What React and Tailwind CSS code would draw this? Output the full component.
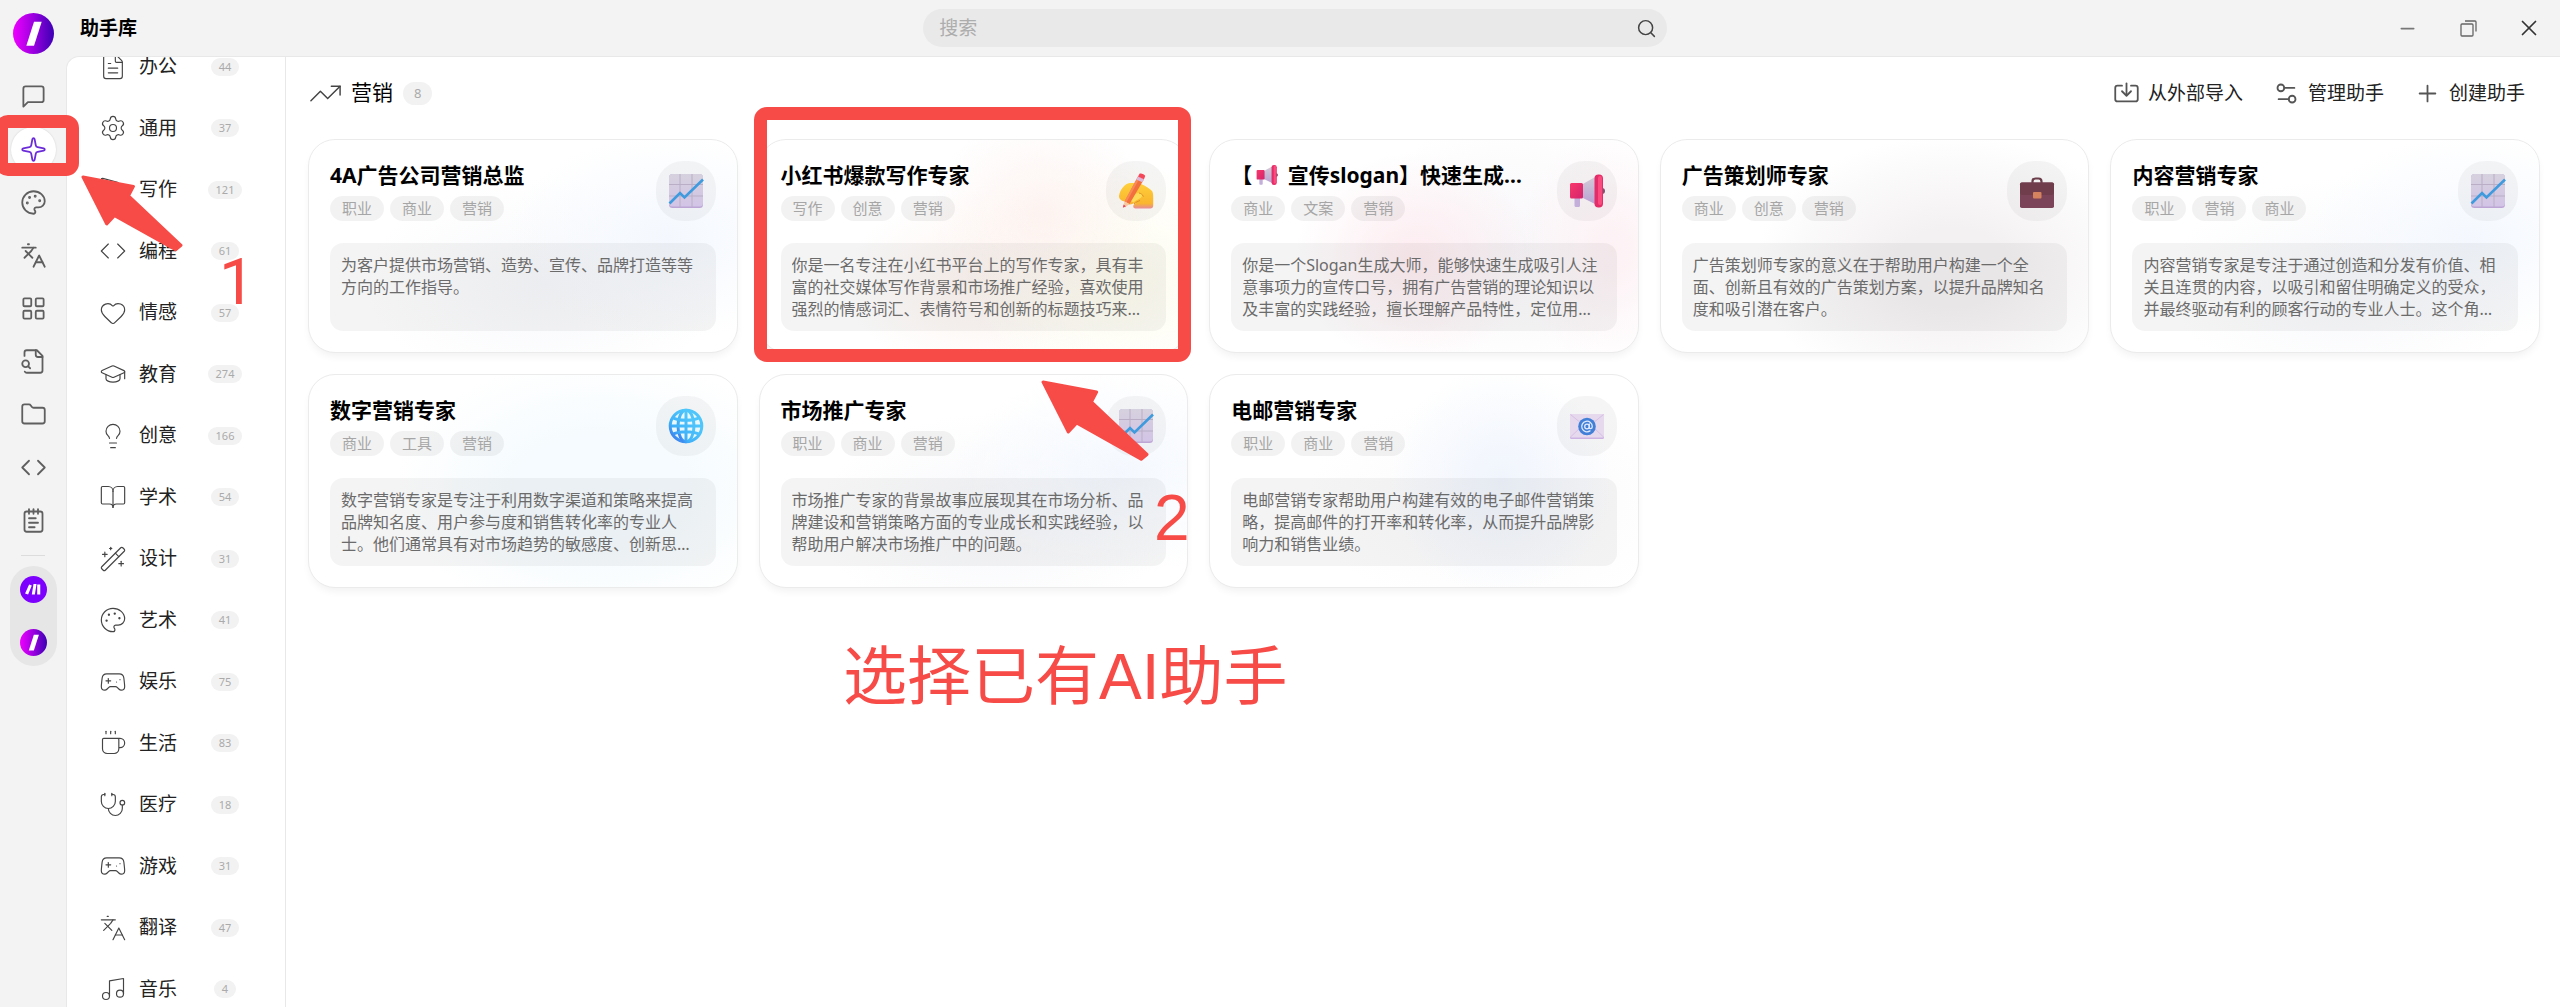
import { useState } from 'react';
import {
  BookOpen, Code, Coffee, FileText, Folder, Gamepad2, GraduationCap, Heart, Languages,
  LayoutGrid, Lightbulb, Minus, Music, NotepadText, PenTool, Plus, Search, Settings,
  Settings2, Sparkle, Stethoscope, TrendingUp, WandSparkles, X,
} from 'lucide-react';

const CATEGORIES = [
  { name: '办公', count: 44, icon: FileText },
  { name: '通用', count: 37, icon: Settings },
  { name: '写作', count: 121, icon: PenTool },
  { name: '编程', count: 61, icon: Code },
  { name: '情感', count: 57, icon: Heart },
  { name: '教育', count: 274, icon: GraduationCap },
  { name: '创意', count: 166, icon: Lightbulb },
  { name: '学术', count: 54, icon: BookOpen },
  { name: '设计', count: 31, icon: WandSparkles },
  { name: '艺术', count: 41, icon: PaletteIcon },
  { name: '娱乐', count: 75, icon: Gamepad2 },
  { name: '生活', count: 83, icon: Coffee },
  { name: '医疗', count: 18, icon: Stethoscope },
  { name: '游戏', count: 31, icon: Gamepad2 },
  { name: '翻译', count: 47, icon: Languages },
  { name: '音乐', count: 4, icon: Music },
];

const RAIL = [
  { id: 'chat', label: '对话', icon: ChatIcon },
  { id: 'agents', label: '助手', icon: Sparkle },
  { id: 'paint', label: '绘画', icon: PaletteIcon },
  { id: 'translate', label: '翻译', icon: Languages },
  { id: 'apps', label: '小程序', icon: LayoutGrid },
  { id: 'knowledge', label: '知识库', icon: FileSearchIcon },
  { id: 'files', label: '文件', icon: Folder },
  { id: 'code', label: '代码', icon: Code },
  { id: 'notes', label: '笔记', icon: NotepadText },
];

const GLOW_CHART =
  'bg-[radial-gradient(ellipse_38%_48%_at_84%_46%,#f4f8fe,transparent),radial-gradient(ellipse_42%_50%_at_55%_68%,#f7f8fb,transparent)]';

const AGENTS = [
  {
    title: '4A广告公司营销总监',
    tags: ['职业', '商业', '营销'],
    emoji: ChartEmoji,
    glow: GLOW_CHART,
    desc: '为客户提供市场营销、造势、宣传、品牌打造等等方向的工作指导。',
  },
  {
    title: '小红书爆款写作专家',
    tags: ['写作', '创意', '营销'],
    emoji: WritingEmoji,
    glow: 'bg-[radial-gradient(ellipse_26%_48%_at_66%_36%,#fdf3f0,transparent),radial-gradient(ellipse_36%_56%_at_84%_66%,#fefcee,transparent),radial-gradient(ellipse_32%_44%_at_52%_68%,#fdf4f0,transparent)]',
    desc: '你是一名专注在小红书平台上的写作专家，具有丰富的社交媒体写作背景和市场推广经验，喜欢使用强烈的情感词汇、表情符号和创新的标题技巧来…',
  },
  {
    title: (
      <>
        【<MegaphoneEmoji className="inline size-[22px] mx-1 align-[-3px]" /> 宣传slogan】快速生成…
      </>
    ),
    tags: ['商业', '文案', '营销'],
    emoji: MegaphoneEmoji,
    glow: 'bg-[radial-gradient(ellipse_28%_50%_at_48%_56%,#fdecf0,transparent),radial-gradient(ellipse_22%_56%_at_94%_52%,#fdf1f4,transparent),radial-gradient(ellipse_36%_60%_at_70%_50%,#f8f6f9,transparent)]',
    desc: '你是一个Slogan生成大师，能够快速生成吸引人注意事项力的宣传口号，拥有广告营销的理论知识以及丰富的实践经验，擅长理解产品特性，定位用…',
  },
  {
    title: '广告策划师专家',
    tags: ['商业', '创意', '营销'],
    emoji: BriefcaseEmoji,
    glow: 'bg-[radial-gradient(ellipse_46%_62%_at_68%_60%,#f4f1f2_30%,transparent)]',
    desc: '广告策划师专家的意义在于帮助用户构建一个全面、创新且有效的广告策划方案，以提升品牌知名度和吸引潜在客户。',
  },
  {
    title: '内容营销专家',
    tags: ['职业', '营销', '商业'],
    emoji: ChartEmoji,
    glow: GLOW_CHART,
    desc: '内容营销专家是专注于通过创造和分发有价值、相关且连贯的内容，以吸引和留住明确定义的受众，并最终驱动有利的顾客行动的专业人士。这个角…',
  },
  {
    title: '数字营销专家',
    tags: ['商业', '工具', '营销'],
    emoji: GlobeEmoji,
    glow: 'bg-[radial-gradient(ellipse_48%_62%_at_68%_54%,#f5fbfe_40%,transparent)]',
    desc: '数字营销专家是专注于利用数字渠道和策略来提高品牌知名度、用户参与度和销售转化率的专业人士。他们通常具有对市场趋势的敏感度、创新思…',
  },
  {
    title: '市场推广专家',
    tags: ['职业', '商业', '营销'],
    emoji: ChartEmoji,
    glow: GLOW_CHART,
    desc: '市场推广专家的背景故事应展现其在市场分析、品牌建设和营销策略方面的专业成长和实践经验，以帮助用户解决市场推广中的问题。',
  },
  {
    title: '电邮营销专家',
    tags: ['职业', '商业', '营销'],
    emoji: MailEmoji,
    glow: 'bg-[radial-gradient(ellipse_26%_54%_at_68%_50%,#f0f5fd,transparent),radial-gradient(ellipse_46%_52%_at_68%_60%,#fafafc,transparent)]',
    desc: '电邮营销专家帮助用户构建有效的电子邮件营销策略，提高邮件的打开率和转化率，从而提升品牌影响力和销售业绩。',
  },
];

/* ---------- icons ---------- */

function Stroke({ size = 24, strokeWidth = 2, className, children }) {
  return (
    <svg width={size} height={size} viewBox="0 0 24 24" fill="none" stroke="currentColor"
      strokeWidth={strokeWidth} strokeLinecap="round" strokeLinejoin="round" className={className} aria-hidden="true">
      {children}
    </svg>
  );
}

function ChatIcon(props) {
  return (
    <Stroke {...props}>
      <path d="M21 15a2 2 0 0 1-2 2H7l-4 4V5a2 2 0 0 1 2-2h14a2 2 0 0 1 2 2z" />
    </Stroke>
  );
}

function PaletteIcon(props) {
  return (
    <Stroke {...props}>
      <circle cx="13.5" cy="6.5" r=".5" fill="currentColor" />
      <circle cx="17.5" cy="10.5" r=".5" fill="currentColor" />
      <circle cx="8.5" cy="7.5" r=".5" fill="currentColor" />
      <circle cx="6.5" cy="12.5" r=".5" fill="currentColor" />
      <path d="M12 2C6.5 2 2 6.5 2 12s4.500 10 10 10c.926 0 1.648-.746 1.648-1.688 0-.437-.18-.835-.437-1.125-.29-.289-.438-.652-.438-1.125a1.64 1.64 0 0 1 1.668-1.668h1.996c3.051 0 5.555-2.503 5.555-5.554C21.965 6.012 17.461 2 12 2z" />
    </Stroke>
  );
}

function FileSearchIcon(props) {
  return (
    <Stroke {...props}>
      <path d="M14 2v4a2 2 0 0 0 2 2h4" />
      <path d="M4.268 21a2 2 0 0 0 1.727 1H18a2 2 0 0 0 2-2V7l-5-5H6a2 2 0 0 0-2 2v3" />
      <path d="m9 18-1.500-1.500" />
      <circle cx="5" cy="14" r="3" />
    </Stroke>
  );
}

function ImportIcon(props) {
  return (
    <Stroke {...props}>
      <path d="M12 3v10" />
      <path d="m8 10 4 4 4-4" />
      <path d="M8 5H4a2 2 0 0 0-2 2v10a2 2 0 0 0 2 2h16a2 2 0 0 0 2-2V7a2 2 0 0 0-2-2h-4" />
    </Stroke>
  );
}

function SlashLogo({ className }) {
  return (
    <svg viewBox="0 0 40 40" className={className} aria-hidden="true">
      <defs>
        <linearGradient id="slash-bg" x1="0" x2="1">
          <stop offset="0" stopColor="#f000ff" />
          <stop offset="0.5" stopColor="#9a00e0" />
          <stop offset="1" stopColor="#3c00b4" />
        </linearGradient>
      </defs>
      <circle cx="20" cy="20" r="20" fill="url(#slash-bg)" />
      <path d="M20.500 8.500h7.500l-7.500 23.500h-7.500z" fill="#fff" />
    </svg>
  );
}

function MakeLogo({ className }) {
  return (
    <svg viewBox="0 0 40 40" className={className} aria-hidden="true">
      <circle cx="20" cy="20" r="20" fill="#7d00ff" />
      <path d="M13.500 12.500l4 1.500-5.500 13.500-4.500-1.500zM20 12h4.500l-2.500 15.500h-4.500zM25.500 12.500h4.500v15h-4.500z" fill="#fff" />
    </svg>
  );
}

/* ---------- emoji pictures ---------- */

function ChartEmoji({ className }) {
  return (
    <svg viewBox="0 0 36 36" className={className} aria-hidden="true">
      <defs>
        <linearGradient id="chart-bg" x1="0" y1="0" x2="0" y2="1">
          <stop offset="0" stopColor="#d6d1de" />
          <stop offset="1" stopColor="#d2c4e6" />
        </linearGradient>
      </defs>
      <rect x="1" y="1" width="34" height="34" rx="3.500" fill="#bda6d6" />
      <rect x="1" y="1" width="34" height="32.500" rx="3.500" fill="url(#chart-bg)" />
      <path d="M12 1v33M24 1v33M1 11.500h34M1 23h34" stroke="#b9aec6" strokeWidth="1" />
      <path d="M1.500 30.500l10.500-10.500 4.500 4.500L35 6.500" fill="none" stroke="#3f9bdd" strokeWidth="2.600" />
    </svg>
  );
}

function WritingEmoji({ className }) {
  return (
    <svg viewBox="0 0 36 36" className={className} aria-hidden="true">
      <defs>
        <linearGradient id="hand-bg" x1="0" y1="0" x2="0" y2="1">
          <stop offset="0" stopColor="#ffd03c" />
          <stop offset="0.800" stopColor="#f9b52e" />
          <stop offset="1" stopColor="#e88a9a" />
        </linearGradient>
      </defs>
      <path d="M1 23c1-6 5-12 11-13h7c6 1 10 4 14 7 2 1.500 2.300 4 2.200 8v7.500c0 2-1 3-3 3H17.500c-2.500 0-3-3-1-4.500l3-2c-3 1-6 3-9 2.500-1.500-.3-2-2-1.500-3.500-4 1-8-1-8-5z" fill="url(#hand-bg)" />
      <path d="M11 27c1-4 5-7 10-7 3 0 4 2 2.500 4-1.500 2-5 2.500-8 5.500" fill="#ffdb58" />
      <path d="M21 20c2 .5 3.500 1.500 4.500 3.500M16 31c2-2 4-2.500 6-3.500" fill="none" stroke="#dc8f20" strokeWidth="1" />
      <path d="M20 3.500l6 2.800L11.500 31l-5-2.500z" fill="#f2703e" />
      <path d="M20 3.500l2 1L8.300 29.500l-1.800-1z" fill="#fa8a55" />
      <path d="M20 3.500l6 2.800-1.700 3-6-2.900z" fill="#dcb9dc" />
      <path d="M21.500.8c1-1 5.500.8 5.700 2.200L26 6.300l-6-2.800z" fill="#f4475a" />
      <path d="M6.500 28.500l5 2.500-4.500 3.500-1.800-.8z" fill="#f7c9a0" />
      <path d="M5.600 31.500l-.8 3.300 3.200-1.500z" fill="#e0415e" />
    </svg>
  );
}

function MegaphoneEmoji({ className }) {
  return (
    <svg viewBox="0 0 36 36" className={className} aria-hidden="true">
      <defs>
        <linearGradient id="horn-bg" x1="0" y1="0" x2="0" y2="1">
          <stop offset="0" stopColor="#d3cbd6" />
          <stop offset="1" stopColor="#b9a2d4" />
        </linearGradient>
        <linearGradient id="horn-red" x1="0" y1="0" x2="1" y2="1">
          <stop offset="0" stopColor="#f9386b" />
          <stop offset="1" stopColor="#d3236c" />
        </linearGradient>
      </defs>
      <rect x="5.500" y="21" width="5.500" height="13" rx="1.500" fill="#c3afda" />
      <circle cx="33" cy="18" r="3" fill="#6b5c70" />
      <path d="M13 11.500L27 3.500v28l-14-7z" fill="url(#horn-bg)" />
      <rect x="1" y="10" width="13" height="15.500" rx="1.500" fill="url(#horn-red)" />
      <rect x="25.500" y="1.500" width="8.500" height="33" rx="4" fill="#e32c68" />
      <rect x="29" y="3" width="4" height="29" rx="2" fill="#fb4a7d" />
    </svg>
  );
}

function BriefcaseEmoji({ className }) {
  return (
    <svg viewBox="0 0 36 36" className={className} aria-hidden="true">
      <path d="M13.500 10V8.500a3 3 0 0 1 3-3h3a3 3 0 0 1 3 3V10" fill="none" stroke="#6b3d4a" strokeWidth="2.200" />
      <rect x="1" y="9.500" width="34" height="25.500" rx="1.800" fill="#7c4459" />
      <path d="M2.800 9.500h30.400A1.800 1.800 0 0 1 35 11.300V19a3 3 0 0 1-3 3H4a3 3 0 0 1-3-3v-7.700a1.800 1.800 0 0 1 1.800-1.800z" fill="#6f3d4c" />
      <rect x="14" y="19" width="8.500" height="6.500" rx="1" fill="#d5825f" />
    </svg>
  );
}

function GlobeEmoji({ className }) {
  return (
    <svg viewBox="0 0 36 36" className={className} aria-hidden="true">
      <defs>
        <linearGradient id="globe-line" x1="1" y1="0" x2="0" y2="1">
          <stop offset="0.300" stopColor="#4fc6fb" />
          <stop offset="0.700" stopColor="#3fb0f8" />
          <stop offset="1" stopColor="#3c66e8" />
        </linearGradient>
      </defs>
      <circle cx="18" cy="18" r="16.500" fill="#eaf7fd" />
      <g fill="none" stroke="url(#globe-line)" strokeWidth="3">
        <circle cx="18" cy="18" r="15.800" />
        <ellipse cx="18" cy="18" rx="8" ry="15.800" />
        <path d="M18 2.200v31.600M2.200 18h31.600M5 9.800c4 2 8 2.400 13 2.400s9-.4 13-2.400M5 26.200c4-2 8-2.400 13-2.400s9 .4 13 2.400" />
      </g>
    </svg>
  );
}

function MailEmoji({ className }) {
  return (
    <svg viewBox="0 0 36 36" className={className} aria-hidden="true">
      <rect x="1" y="6" width="34" height="25" rx="1.500" fill="#cdb2e4" />
      <rect x="1" y="6" width="34" height="23.500" rx="1.500" fill="#e6d9ee" />
      <path d="M1.500 6.500L18 20 34.500 6.500M1.500 29L13 18M34.500 29L23 18" fill="none" stroke="#d6bfe4" strokeWidth="1" />
      <circle cx="18" cy="18.500" r="8.800" fill="#4280d8" />
      <circle cx="18" cy="18.500" r="2.300" fill="none" stroke="#dfe9fb" strokeWidth="1.300" />
      <path d="M20.300 16v3.300c0 2 3 1.800 3-.8a5.300 5.300 0 1 0-2.300 4.400" fill="none" stroke="#dfe9fb" strokeWidth="1.300" strokeLinecap="round" />
    </svg>
  );
}

/* ---------- layout parts ---------- */

function Rail({ active, onChange }) {
  return (
    <aside className="w-[66px] shrink-0 flex flex-col items-center pt-[13px]">
      <SlashLogo className="size-[41px]" />
      <nav className="mt-5 flex flex-col gap-2">
        {RAIL.map(({ id, label, icon: Icon }) => (
          <button
            key={id}
            aria-label={label}
            onClick={() => onChange(id)}
            className={`size-[45px] rounded-full flex items-center justify-center ${
              active === id
                ? 'bg-white text-[#6b2bd9] shadow-[0_0_2px_rgba(0,0,0,0.15)]'
                : 'text-[#5f5f5f]'
            }`}
          >
            <Icon size={27} strokeWidth={1.6} />
          </button>
        ))}
      </nav>
      <hr className="mt-3 w-6 border-[#dcdcdc]" />
      <div className="mt-[10px] w-[47px] rounded-full bg-[#e6e6e6] p-[10px] flex flex-col gap-[26px]">
        <button aria-label="Make"><MakeLogo className="size-[27px]" /></button>
        <button aria-label="Slash"><SlashLogo className="size-[27px]" /></button>
      </div>
    </aside>
  );
}

function TitleBar() {
  return (
    <header className="h-14 shrink-0 grid grid-cols-[17fr_15fr_18fr] items-center pl-[14px]">
      <h1 className="text-[19px] font-bold text-black">助手库</h1>
      <label className="h-[38px] rounded-full bg-[#e9e9e9] flex items-center pl-4 pr-[10px]">
        <input
          type="text"
          aria-label="搜索"
          placeholder="搜索"
          className="flex-1 min-w-0 bg-transparent outline-none text-[19px] placeholder:text-[#adadad]"
        />
        <Search size={21} strokeWidth={1.7} className="text-[#444]" />
      </label>
      <div className="flex justify-end text-[#333]">
        <button aria-label="最小化" className="w-[61px] h-14 flex items-center justify-center">
          <Minus size={21} strokeWidth={2} className="text-[#777]" />
        </button>
        <button aria-label="还原" className="w-[61px] h-14 flex items-center justify-center">
          <svg width="17" height="17" viewBox="0 0 17 17" fill="none" stroke="#666" strokeWidth="1.300" aria-hidden="true">
            <rect x="1" y="4" width="12" height="12" rx="1" />
            <path d="M5 1h10a1 1 0 0 1 1 1v9.500" />
          </svg>
        </button>
        <button aria-label="关闭" className="w-[61px] h-14 flex items-center justify-center">
          <X size={26} strokeWidth={1.6} />
        </button>
      </div>
    </header>
  );
}

function CategoryList() {
  return (
    <nav className="w-[219px] shrink-0 border-r border-[#e8e8e8] overflow-hidden">
      {/* the list is scrolled, so its first row is cut by the top edge */}
      <ul className="-mt-[21px]">
        {CATEGORIES.map(({ name, count, icon: Icon }) => (
          <li key={name} className="h-[61px] even:h-[62px]">
            <button className="w-full h-full flex items-center pl-8 text-[#222]">
              <Icon size={28} strokeWidth={1} className="text-[#444]" />
              <span className="ml-3 text-[19px]">{name}</span>
              <span className="flex-1 flex justify-center pr-3">
                <span className="rounded-full bg-[#f2f2f2] px-2 text-[11px] leading-[18px] text-[#aaa]">{count}</span>
              </span>
            </button>
          </li>
        ))}
      </ul>
    </nav>
  );
}

function ActionButton({ icon: Icon, children }) {
  return (
    <button className="flex items-center gap-2 px-[15px] text-[19px] text-[#222]">
      <Icon size={27} strokeWidth={1.6} className="text-[#555]" />
      {children}
    </button>
  );
}

function AgentCard({ agent }) {
  const Emoji = agent.emoji;
  return (
    <article className="relative overflow-hidden rounded-[27px] border border-[#ebebeb] bg-white p-[21px] shadow-[0_5px_8px_-2px_rgba(0,0,0,0.06)]">
      <div className={`absolute inset-0 ${agent.glow}`} />
      <div className="relative flex justify-between gap-4">
        <div className="min-w-0 flex flex-col justify-between">
          <h3 className="truncate text-[21px] leading-7 font-bold text-black">{agent.title}</h3>
          <div className="flex gap-1.5">
            {agent.tags.map(tag => (
              <span key={tag} className="rounded-full bg-black/5 px-3 text-[15px] leading-[25px] text-[#a6a6a6]">
                {tag}
              </span>
            ))}
          </div>
        </div>
        <div className="size-[60px] shrink-0 rounded-[27px] bg-black/[0.04] flex items-center justify-center">
          <Emoji className="size-9" />
        </div>
      </div>
      <div className="relative mt-[22px] h-[88px] rounded-[13px] bg-black/[0.045] p-[11px]">
        <p className="line-clamp-3 text-[16px] leading-[22px] text-[#6b6b6b]">{agent.desc}</p>
      </div>
    </article>
  );
}

function Arrow({ className }) {
  return (
    <svg viewBox="0 0 103 78" className={className} aria-hidden="true">
      <path
        d="M2 2L53 11.500l-5 9.500L101 71l-5.500 4.500L34 41l-8 8.500z"
        fill="#f74b47" stroke="#f74b47" strokeWidth="3" strokeLinejoin="round"
      />
    </svg>
  );
}

function Annotations() {
  return (
    <div className="pointer-events-none absolute inset-0 overflow-hidden font-['Liberation_Sans','Noto_Sans_CJK_SC',sans-serif] text-[64px] leading-none text-[#f74b47]">
      <div className="absolute left-[-5px] top-[115px] w-[84px] h-[61px] rounded-[13px] border-[13px] border-[#f74b47]" />
      <Arrow className="absolute left-[81px] top-[175px] w-[102px]" />
      <span className="absolute left-[219px] top-[251px] font-['Roboto',sans-serif]">1</span>
      <div className="absolute left-[754px] top-[107px] w-[437px] h-[255px] rounded-[13px] border-[13px] border-[#f74b47]" />
      <Arrow className="absolute left-[1041px] top-[380px] w-[108px]" />
      <span className="absolute left-[1154px] top-[486px]">2</span>
      <p className="absolute left-[843px] top-[645px] whitespace-nowrap">选择已有AI助手</p>
    </div>
  );
}

export default function App() {
  const [active, setActive] = useState('agents');

  return (
    <div className="relative h-screen overflow-hidden flex bg-[#f3f3f3] font-['Noto_Sans','Noto_Sans_CJK_SC',sans-serif]">
      <Rail active={active} onChange={setActive} />

      <div className="flex-1 min-w-0 flex flex-col">
        <TitleBar />
        <div className="flex-1 min-h-0 flex overflow-hidden rounded-tl-[13px] border-t border-l border-[#e8e8e8] bg-white">
          <CategoryList />

          <main className="flex-1 min-w-0 pl-[22px] pr-5">
            <div className="h-[72px] flex items-center">
              <TrendingUp size={35} strokeWidth={1} className="text-[#444]" />
              <h2 className="ml-2 text-[21px] text-black">营销</h2>
              <span className="ml-[10px] rounded-full bg-[#f2f2f2] px-[11px] text-[13px] leading-[23px] text-[#aaa]">8</span>
              <div className="ml-auto flex">
                <ActionButton icon={ImportIcon}>从外部导入</ActionButton>
                <ActionButton icon={Settings2}>管理助手</ActionButton>
                <ActionButton icon={Plus}>创建助手</ActionButton>
              </div>
            </div>

            <div className="mt-[10px] grid grid-cols-[repeat(auto-fill,minmax(400px,1fr))] gap-[21px]">
              {AGENTS.map(agent => (
                <AgentCard key={agent.desc} agent={agent} />
              ))}
            </div>
          </main>
        </div>
      </div>

      <Annotations />
    </div>
  );
}
